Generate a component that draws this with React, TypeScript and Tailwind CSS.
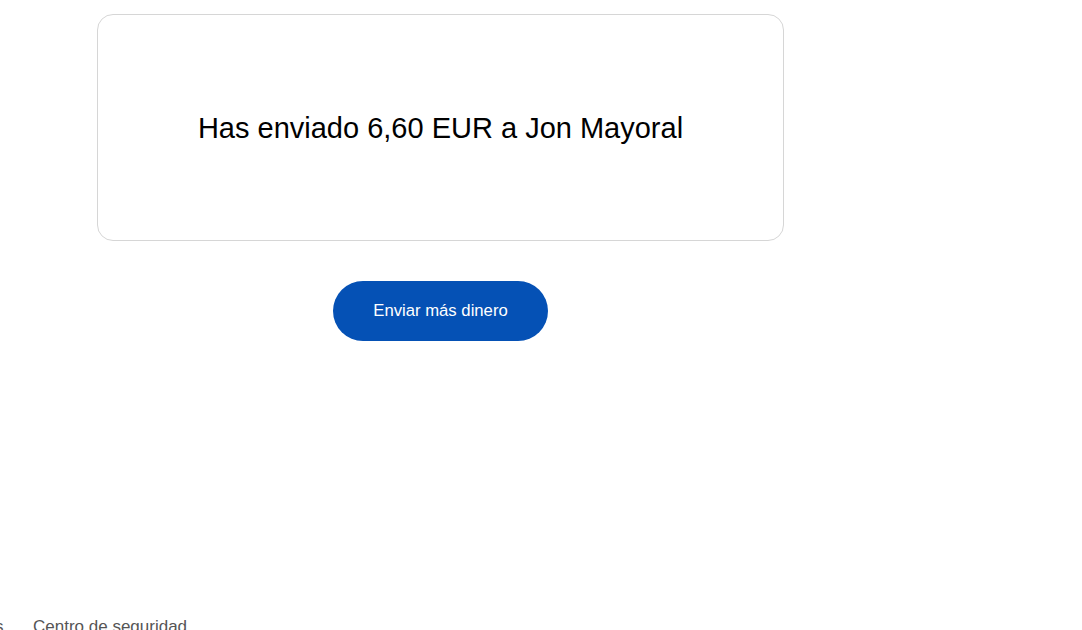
export default function App() {
  return (
    <div className="min-h-[630px] h-[630px] overflow-hidden bg-white" style={{ fontFamily: '"Liberation Sans", Arial, sans-serif' }}>
      <div className="pt-[14px] pl-[97px] w-[784px]">
        <div className="h-[227px] w-[687px] rounded-[16px] border border-[#d6d6d6] flex items-center justify-center">
          <h1 className="text-[29px] leading-[34px] text-black">Has enviado 6,60 EUR a Jon Mayoral</h1>
        </div>
        <div className="flex justify-center mt-[40px]">
          <button className="h-[60px] w-[215px] rounded-full bg-[#0551b5] text-white text-[16.7px]">Enviar más dinero</button>
        </div>
      </div>
      <div className="mt-[276px] flex items-center text-[17px] leading-[20px] text-[#555]">
        <span className="-ml-[5px] w-[38px] text-[#555]">s</span>
        <span>Centro de seguridad</span>
      </div>
    </div>
  );
}
